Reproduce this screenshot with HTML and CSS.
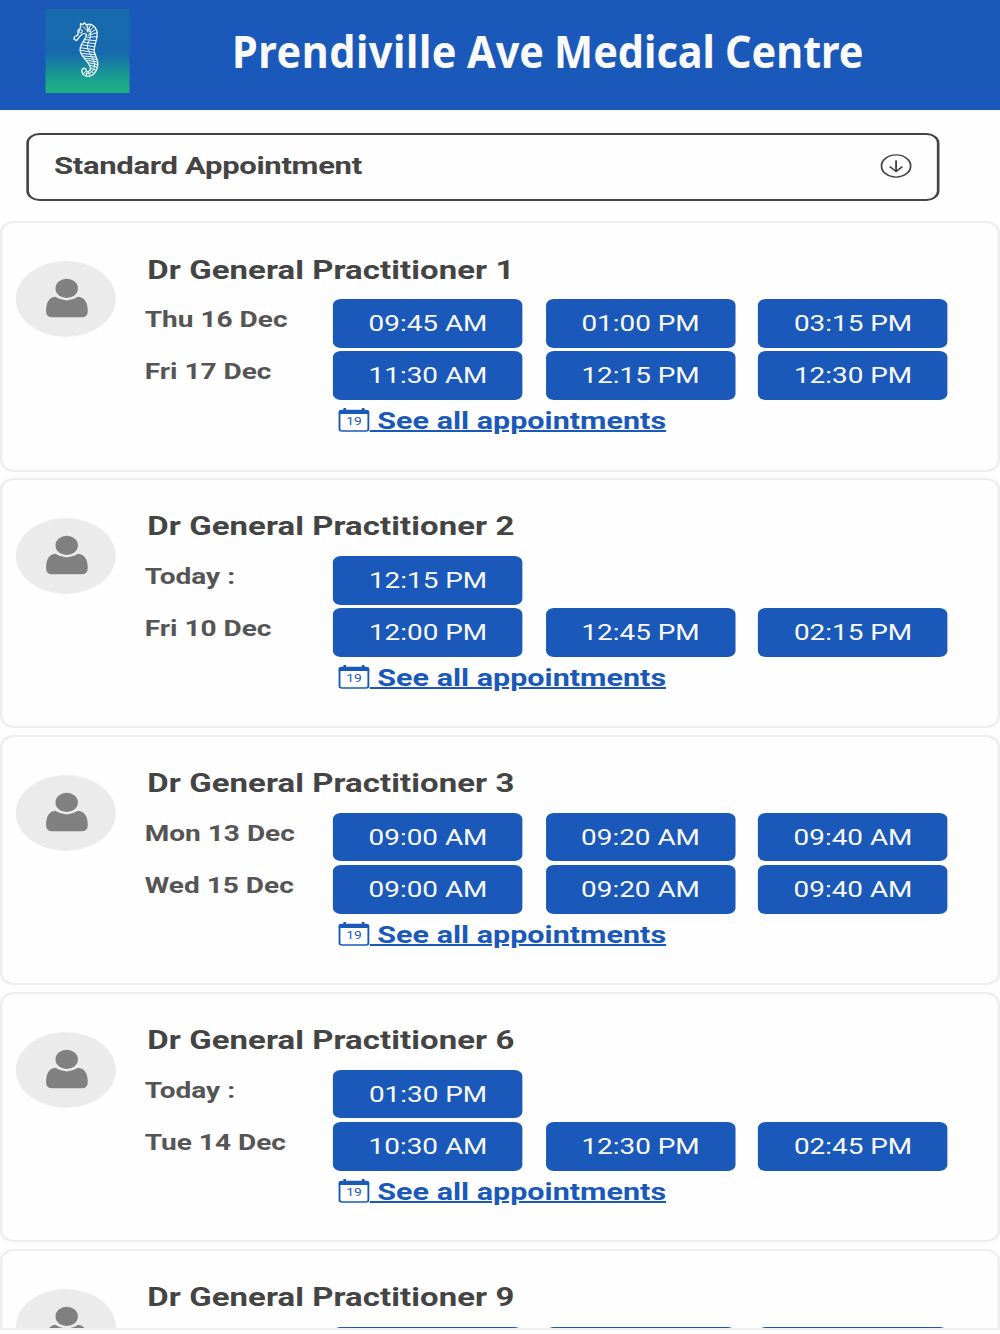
FILE: index.html
```
<!DOCTYPE html>
<html lang="en">

<head>
    <meta charset="utf-8">
    <title>Prendiville Ave Medical Centre</title>
    <link rel="stylesheet" href="styles.css">
</head>

<body>
    <svg width="0" height="0" class="sprites">
        <symbol id="person" viewBox="0 0 76 76">
            <ellipse cx="38.7" cy="27.4" rx="8.5" ry="9.6" />
            <path d="M30 35.8 Q38.7 43 47.4 35.8 Q54.7 37 54.7 50 Q54.7 56.3 50 56.3 H27.7 Q23 56.3 23 50 Q23 37 30 35.8 Z" />
        </symbol>
        <symbol id="calendar" viewBox="0 0 24 24">
            <rect x="1" y="2.6" width="22" height="20.4" rx="2" fill="#fff" stroke="#1a59b9" stroke-width="1.5" />
            <path d="M.4 6V4Q.4 2 2.4 2H4V0H6V2H18V0H20V2H21.6Q23.6 2 23.6 4V6Z" fill="#1a59b9" />
            <text x="12" y="17.2" text-anchor="middle" font-size="10.5" fill="#1a59b9">19</text>
        </symbol>
    </svg>

    <header class="header">
        <svg class="logo" viewBox="0 0 84 84">
            <defs>
                <linearGradient id="sea" x1="0" y1="0" x2="0" y2="1">
                    <stop offset="0" stop-color="#166bad" />
                    <stop offset=".52" stop-color="#1769ae" />
                    <stop offset=".85" stop-color="#1aa48d" />
                    <stop offset="1" stop-color="#1fb184" />
                </linearGradient>
            </defs>
            <rect width="84" height="84" fill="url(#sea)" />
            <g transform="scale(.3333) translate(-45 -27)" fill="none" stroke="#f2fafd" stroke-linecap="round" stroke-linejoin="round">
                <path stroke-width="4" d="M168 104C160 96 156 102 150 107L138 122L130 117L132 111L143 104L142 92L150 83V71L156 74L162 68L167 75C180 68 193 77 199 92C204 110 192 132 191 150C190 163 203 175 202 194C200 215 188 229 172 229C158 229 152 216 155 208C159 202 168 205 167 211C166 218 178 217 180 207C181 188 153 175 149 152C147 131 166 122 168 104Z" />
                <circle cx="151" cy="94" r="5" stroke-width="3" />
                <path stroke-width="3" d="M168 80C188 92 181 112 173 128C163 152 190 168 192 192C193 210 182 223 166 221" />
                <path stroke-width="3" d="M158 80L170 92M172 75L170 96M180 74L173 94M189 80L175 96M196 88L176 101M200 98L173 106M200 110L170 112M196 122L164 119M193 131L158 126M191 140L152 134M190 149L149 143M190 157L149 151M192 164L152 160M196 171L157 168M199 178L163 175M201 186L170 181M202 194L175 188M201 202L179 196M197 211L181 204M190 220L179 211M180 227L174 216M168 228L168 218M158 222L164 215" />
            </g>
        </svg>
        <h1 class="title"><span>Prendiville</span> Ave Medical Centre</h1>
    </header>

    <main class="booking">
        <div class="select">
            <span>Standard Appointment</span>
            <svg class="arrow" viewBox="0 0 24 24">
                <circle cx="12" cy="12" r="11.1" />
                <path d="M12 6.2V17.4M7.1 12.6L12 17.4L16.9 12.6" />
            </svg>
        </div>

        <section class="card">
            <svg class="avatar"><use href="#person" /></svg>
            <div class="details">
                <h2>Dr General Practitioner 1</h2>
                <div class="row"><span class="date">Thu 16 Dec</span><button>09:45 AM</button><button>01:00 PM</button><button>03:15 PM</button></div>
                <div class="row"><span class="date">Fri 17 Dec</span><button>11:30 AM</button><button>12:15 PM</button><button>12:30 PM</button></div>
                <a class="all"><svg class="calendar"><use href="#calendar" /></svg><span>&nbsp;See all appointments</span></a>
            </div>
        </section>

        <section class="card">
            <svg class="avatar"><use href="#person" /></svg>
            <div class="details">
                <h2>Dr General Practitioner 2</h2>
                <div class="row"><span class="date">Today :</span><button>12:15 PM</button></div>
                <div class="row"><span class="date">Fri 10 Dec</span><button>12:00 PM</button><button>12:45 PM</button><button>02:15 PM</button></div>
                <a class="all"><svg class="calendar"><use href="#calendar" /></svg><span>&nbsp;See all appointments</span></a>
            </div>
        </section>

        <section class="card">
            <svg class="avatar"><use href="#person" /></svg>
            <div class="details">
                <h2>Dr General Practitioner 3</h2>
                <div class="row"><span class="date">Mon 13 Dec</span><button>09:00 AM</button><button>09:20 AM</button><button>09:40 AM</button></div>
                <div class="row"><span class="date">Wed 15 Dec</span><button>09:00 AM</button><button>09:20 AM</button><button>09:40 AM</button></div>
                <a class="all"><svg class="calendar"><use href="#calendar" /></svg><span>&nbsp;See all appointments</span></a>
            </div>
        </section>

        <section class="card">
            <svg class="avatar"><use href="#person" /></svg>
            <div class="details">
                <h2>Dr General Practitioner 6</h2>
                <div class="row"><span class="date">Today :</span><button>01:30 PM</button></div>
                <div class="row"><span class="date">Tue 14 Dec</span><button>10:30 AM</button><button>12:30 PM</button><button>02:45 PM</button></div>
                <a class="all"><svg class="calendar"><use href="#calendar" /></svg><span>&nbsp;See all appointments</span></a>
            </div>
        </section>

        <section class="card">
            <svg class="avatar"><use href="#person" /></svg>
            <div class="details">
                <h2>Dr General Practitioner 9</h2>
                <div class="row"><span class="date"></span><button></button><button></button><button></button></div>
            </div>
        </section>
    </main>
</body>

</html>
```

FILE: styles.css
```
* {
    box-sizing: border-box;
}

body {
    margin: 0;
    height: 1334px;
    overflow: hidden;
    font-family: Roboto, sans-serif;
    background-color: #fefefe;
    color: #444;
}

.sprites {
    display: none;
}

/* Header */
.header {
    display: flex;
    height: 110px;
    padding: 9px 0 0 45px;
    background-color: #1a59b9;
}

.logo {
    width: 85px;
    height: 84px;
    flex: none;
}

.title {
    margin: 9px 0 0 102px;
    font-family: "Noto Sans", sans-serif;
    font-size: 45px;
    line-height: 66px;
    font-weight: 700;
    white-space: nowrap;
    word-spacing: -0.8px;
    color: #fafafa;
    transform: scaleX(0.92);
    transform-origin: left;
}

.title span {
    letter-spacing: 0.6px;
}

/* Booking list, shown wider than it is laid out */
.booking {
    width: 760px;
    height: 1220px;
    padding-top: 23px;
    overflow: hidden;
    border-bottom: 2px solid #eee;
    transform: scaleX(1.3158);
    transform-origin: left;
}

.select {
    display: flex;
    justify-content: space-between;
    align-items: center;
    width: 694px;
    height: 67.5px;
    margin: 0 0 20.5px 20px;
    padding: 0 19px 2px;
    border: 2px solid #444;
    border-radius: 10px;
    font-size: 23.6px;
    letter-spacing: -0.25px;
    font-weight: 700;
}

.select span {
    padding-top: 1px;
}

.arrow {
    width: 24px;
    height: 24px;
    fill: none;
    stroke: #444;
    stroke-width: 1.4;
}

/* Doctor cards */
.card {
    display: flex;
    height: 250.5px;
    margin-bottom: 6.4px;
    padding: 38px 0 0 10px;
    border: 2px solid #eee;
    border-radius: 11px;
}

.avatar {
    width: 76px;
    height: 76px;
    flex: none;
    border-radius: 50%;
    background-color: #ebebeb;
    fill: #808080;
}

.details {
    padding-left: 22px;
}

.details h2 {
    margin: -6.5px 0 13.5px 2px;
    font-size: 25px;
    letter-spacing: 0.06px;
    line-height: 31px;
    font-weight: 700;
}

.row {
    display: flex;
    height: 48.7px;
    margin-bottom: 3.8px;
    gap: 17.5px;
}

.date {
    width: 125.8px;
    font-size: 21.3px;
    line-height: 41px;
    font-weight: 700;
    color: #555;
}

button {
    width: 144px;
    height: 48.7px;
    padding: 0;
    border: none;
    border-radius: 6px;
    font-family: inherit;
    font-size: 21.2px;
    color: #fafafa;
    background-color: #1a59b9;
}

.all {
    display: flex;
    margin-left: 147px;
    font-size: 23.2px;
    font-weight: 700;
    line-height: 35px;
    color: #1a59b9;
}

.all span {
    text-decoration: underline;
    text-decoration-thickness: 2px;
}

.calendar {
    width: 24px;
    height: 24px;
    margin-top: 4.5px;
    font-weight: 400;
}
```
